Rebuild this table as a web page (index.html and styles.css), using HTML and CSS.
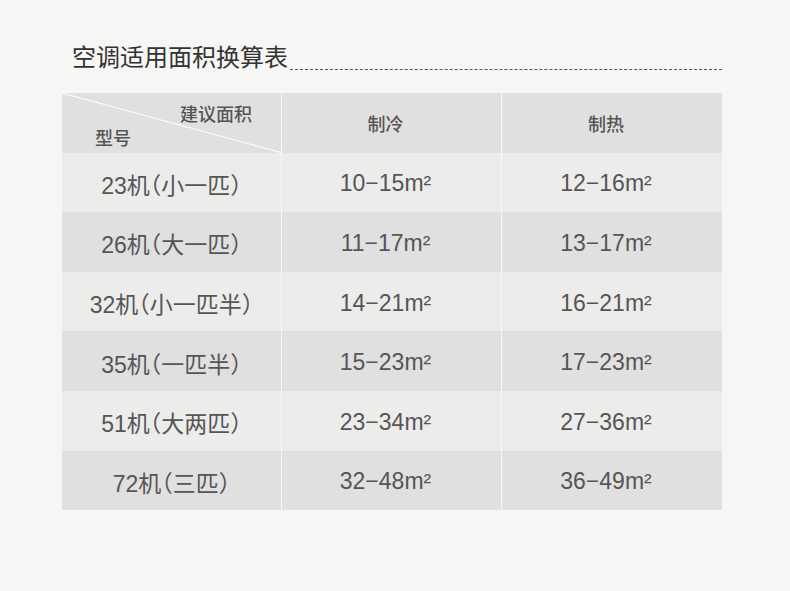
FILE: index.html
```html
<!DOCTYPE html>
<html lang="zh">
<head>
<meta charset="utf-8">
<link rel="stylesheet" href="styles.css">
</head>
<body>
<div class="page">
  <div class="title-row">
    <h1 class="title">空调适用面积换算表</h1>
    <div class="dash"></div>
  </div>
  <div class="table">
    <div class="row head">
      <div class="cell diag">
        <svg class="diag-line" viewBox="0 0 219 59" preserveAspectRatio="none"><line x1="0" y1="0" x2="219" y2="59" stroke="#ffffff" stroke-width="1"/></svg>
        <span class="d-top">建议面积</span>
        <span class="d-bot">型号</span>
      </div>
      <div class="cell">制冷</div>
      <div class="cell">制热</div>
    </div>
    <div class="row light">
      <div class="cell">23机（小一匹）</div>
      <div class="cell">10−15m²</div>
      <div class="cell">12−16m²</div>
    </div>
    <div class="row dark">
      <div class="cell">26机（大一匹）</div>
      <div class="cell">11−17m²</div>
      <div class="cell">13−17m²</div>
    </div>
    <div class="row light">
      <div class="cell">32机（小一匹半）</div>
      <div class="cell">14−21m²</div>
      <div class="cell">16−21m²</div>
    </div>
    <div class="row dark">
      <div class="cell">35机（一匹半）</div>
      <div class="cell">15−23m²</div>
      <div class="cell">17−23m²</div>
    </div>
    <div class="row light">
      <div class="cell">51机（大两匹）</div>
      <div class="cell">23−34m²</div>
      <div class="cell">27−36m²</div>
    </div>
    <div class="row dark">
      <div class="cell">72机（三匹）</div>
      <div class="cell">32−48m²</div>
      <div class="cell">36−49m²</div>
    </div>
  </div>
</div>
</body>
</html>
```
FILE: styles.css
```css
html, body {
  margin: 0;
  padding: 0;
  background: #f6f6f5;
}
body {
  font-family: "Liberation Sans", "Noto Sans CJK SC", sans-serif;
  color: #555555;
}
.page {
  width: 790px;
  height: 591px;
  padding: 42px 0 0 62px;
  box-sizing: border-box;
}
.title-row {
  display: flex;
  align-items: flex-end;
  width: 660px;
  height: 32px;
}
.title {
  margin: 0 0 0 10px;
  font-size: 24px;
  font-weight: normal;
  color: #333333;
  line-height: 32px;
}
.dash {
  flex: 1;
  border-bottom: 1px dashed #555555;
  margin-bottom: 4px;
  margin-left: 2px;
}
.table {
  margin-top: 19px;
  width: 660px;
}
.row {
  display: grid;
  grid-template-columns: 219px 220px 221px;
  height: 59.6px;
}
.row.head, .row.dark { background: #e0e0e0; }
.row.light { background: #ececeb; }
.cell {
  display: flex;
  align-items: center;
  justify-content: center;
  font-size: 23px;
  padding-top: 3px;
  padding-right: 12px;
  box-sizing: border-box;
  border-left: 1px solid #f7f7f7;
  font-feature-settings: "halt";
}
.cell:first-child {
  border-left: none;
  padding-right: 0;
}
.head .cell {
  font-size: 18px;
  font-weight: 500;
  padding-top: 0;
  color: #555555;
}
.cell.diag {
  position: relative;
  display: block;
}
.diag-line {
  position: absolute;
  left: 0;
  top: 0;
  width: 100%;
  height: 100%;
}
.d-top {
  position: absolute;
  left: 118px;
  top: 7px;
}
.d-bot {
  position: absolute;
  left: 33px;
  top: 31px;
}
```
